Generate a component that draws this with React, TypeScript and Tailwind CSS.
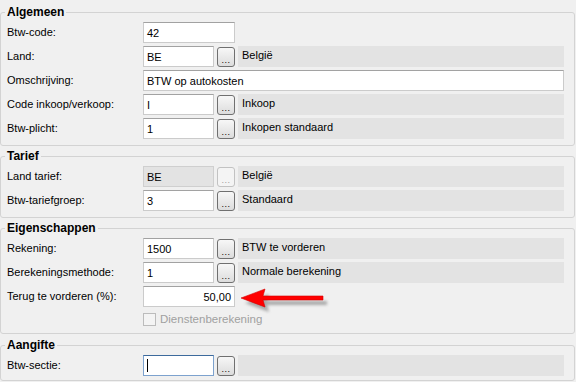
import React from 'react';

function DotsButton({ disabled = false }: { disabled?: boolean }) {
  return (
    <div
      className={`ml-[3px] w-[18px] h-[20px] shrink-0 rounded-[3px] border flex items-end justify-center pb-[3px] ${
        disabled
          ? 'border-[#c2c2c2] bg-[#f4f4f4] text-[#9c9c9c]'
          : 'border-[#707070] bg-linear-to-b from-[#f7f7f7] to-[#dcdcdc] text-black'
      }`}
    >
      <span className="text-[9px] leading-[6px] tracking-[0.5px]">...</span>
    </div>
  );
}

function Field({
  value = '',
  width,
  disabled = false,
  focused = false,
  right = false,
}: {
  value?: string;
  width: string;
  disabled?: boolean;
  focused?: boolean;
  right?: boolean;
}) {
  return (
    <div
      className={`${width} h-[21px] shrink-0 border flex items-center px-[3px] ${right ? 'justify-end' : ''} ${
        disabled
          ? 'bg-[#e3e3e3] border-[#cfcfcf]'
          : focused
          ? 'bg-white border-[#7da2ce] border-t-[#3d6a9c]'
          : 'bg-white border-[#cbcbcb] border-t-[#a2a2a2]'
      }`}
    >
      {focused ? <span className="w-px h-[13px] bg-black" /> : <span className="pt-[1px]">{value}</span>}
    </div>
  );
}

function Desc({ text = '' }: { text?: string }) {
  return (
    <div className="ml-[3px] w-[326px] h-[21px] bg-[#e3e3e3] pl-[4px] flex items-center pb-[2px]">
      {text}
    </div>
  );
}

function Row({ label, children }: { label: string; children: React.ReactNode }) {
  return (
    <div className="flex items-center h-[21px]">
      <div className="w-[136px] shrink-0">{label}</div>
      {children}
    </div>
  );
}

function Group({ title, className = '', children }: { title: string; className?: string; children: React.ReactNode }) {
  return (
    <fieldset className={`border border-[#d3d3d3] rounded-[3px] pl-[6px] pr-[10px] pt-[3px] pb-[6px] min-w-0 ${className}`}>
      <legend className="-ml-[2px] px-[2px] text-[12px] leading-[14px] font-bold">{title}</legend>
      <div className="flex flex-col gap-[3px]">{children}</div>
    </fieldset>
  );
}

export default function App() {
  return (
    <div className="relative w-[576px] h-[382px] overflow-hidden bg-[#f0f0f0] pr-[1px] pt-[5px] flex flex-col gap-[3px] text-[11px] text-black font-['Liberation_Sans',Arial,sans-serif]">
      {/* Algemeen */}
      <Group title="Algemeen">
        <Row label="Btw-code:">
          <Field value="42" width="w-[92px]" />
        </Row>
        <Row label="Land:">
          <Field value="BE" width="w-[71px]" />
          <DotsButton />
          <Desc text="België" />
        </Row>
        <Row label="Omschrijving:">
          <Field value="BTW op autokosten" width="w-[421px]" />
        </Row>
        <Row label="Code inkoop/verkoop:">
          <Field value="I" width="w-[71px]" />
          <DotsButton />
          <Desc text="Inkoop" />
        </Row>
        <Row label="Btw-plicht:">
          <Field value="1" width="w-[71px]" />
          <DotsButton />
          <Desc text="Inkopen standaard" />
        </Row>
      </Group>

      {/* Tarief */}
      <Group title="Tarief">
        <Row label="Land tarief:">
          <Field value="BE" width="w-[71px]" disabled />
          <DotsButton disabled />
          <Desc text="België" />
        </Row>
        <Row label="Btw-tariefgroep:">
          <Field value="3" width="w-[71px]" />
          <DotsButton />
          <Desc text="Standaard" />
        </Row>
      </Group>

      {/* Eigenschappen */}
      <Group title="Eigenschappen" className="!pb-[2px]">
        <Row label="Rekening:">
          <Field value="1500" width="w-[71px]" />
          <DotsButton />
          <Desc text="BTW te vorderen" />
        </Row>
        <Row label="Berekeningsmethode:">
          <Field value="1" width="w-[71px]" />
          <DotsButton />
          <Desc text="Normale berekening" />
        </Row>
        <Row label="Terug te vorderen (%):">
          <Field value="50,00" width="w-[92px]" right />
        </Row>
        <div className="flex items-center h-[21px] pb-[2px]">
          <div className="w-[136px] shrink-0" />
          <div className="w-[13px] h-[13px] border border-[#bcbcbc] bg-[#f4f4f4]" />
          <span className="ml-[4px] text-[#a0a0a0] text-[11.5px]">Dienstenberekening</span>
        </div>
      </Group>

      {/* Aangifte */}
      <Group title="Aangifte" className="mt-[1px] !pb-[4px]">
        <Row label="Btw-sectie:">
          <Field width="w-[71px]" focused />
          <DotsButton />
          <Desc />
        </Row>
      </Group>

      {/* rode pijl */}
      <svg className="absolute left-[238px] top-[286px]" width="95" height="30" viewBox="0 0 95 30">
        <defs>
          <filter id="sh" x="-20%" y="-50%" width="140%" height="200%">
            <feGaussianBlur stdDeviation="1.6" />
          </filter>
        </defs>
        <polygon
          points="3,12 27,3 25,10 85,10 85,14 25,14 27,21"
          transform="translate(4,5)"
          fill="#7a7a7a"
          opacity="0.6"
          filter="url(#sh)"
        />
        <polygon points="3,12 27,3 25,10 85,10 85,14 25,14 27,21" fill="#ff0000" stroke="#d40000" strokeWidth="0.6" />
      </svg>
    </div>
  );
}
